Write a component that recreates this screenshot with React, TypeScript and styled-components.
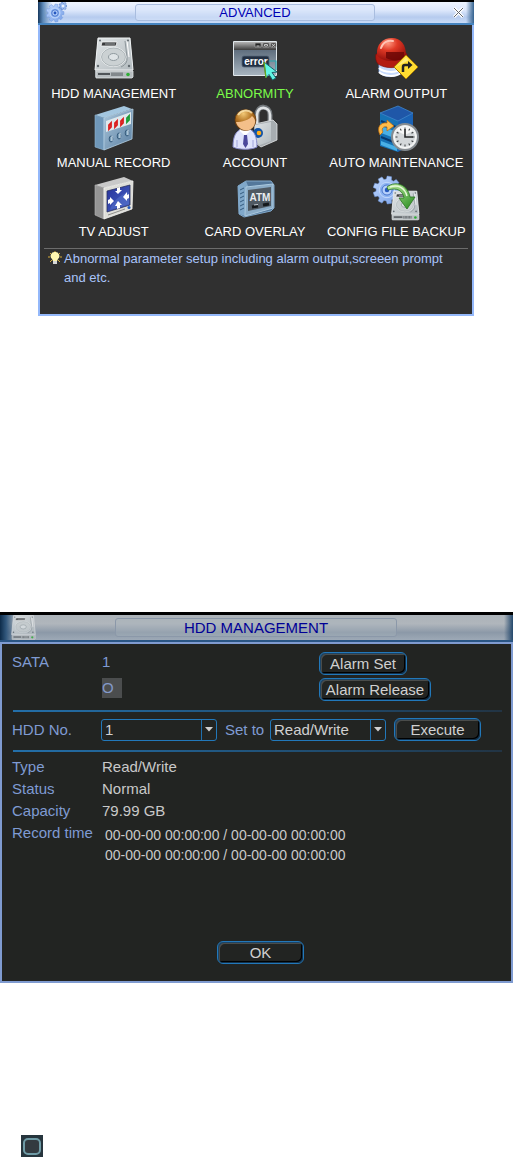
import React from "react";
import styled, { createGlobalStyle } from "styled-components";

const GlobalStyle = createGlobalStyle`
  *, *::before, *::after { box-sizing: border-box; }
  body {
    margin: 0;
    background: #ffffff;
    font-family: "Liberation Sans", Arial, sans-serif;
  }
  button, select { font-family: inherit; }
`;

const Page = styled.main`
  display: flex;
  flex-direction: column;
`;

/* ---------- window chrome ---------- */

const AdvancedWindow = styled.section`
  margin: 0 39px 296px 38px;
  background: #303030;
`;

const HddWindow = styled.section`
  background: #222422;
`;

const TitleBar = styled.header<{ $dim?: boolean }>`
  display: grid;
  grid-template-columns: ${(p) => (p.$dim ? "115px 1fr 116px" : "97px 1fr 99px")};
  align-items: center;
  height: ${(p) => (p.$dim ? 30 : 25)}px;
  border-top: ${(p) => (p.$dim ? 3 : 2)}px solid #000000;
  border-bottom: 2px solid ${(p) => (p.$dim ? "#2a5584" : "#4684bf")};
  background: ${(p) =>
    p.$dim
      ? `linear-gradient(90deg, #0d2b49 0, #31577c 6px, rgba(120,145,170,0) 16px, rgba(120,145,170,0) calc(100% - 9px), #24486c 100%),
         linear-gradient(180deg, #acb3b9 0%, #b0b6bc 35%, #8c99a8 70%, #9da9b6 100%)`
      : `linear-gradient(90deg, #16385e 0, #5d89b8 5px, rgba(180,205,240,0) 14px, rgba(180,205,240,0) calc(100% - 8px), #34628f 100%),
         linear-gradient(180deg, #eef4ff 0%, #dce7fb 40%, #b6cbee 72%, #cadcf8 100%)`};
`;

const TitleIcon = styled.div<{ $inset: number }>`
  display: flex;
  padding-left: ${(p) => p.$inset}px;
`;

const Title = styled.h1<{ $dim?: boolean }>`
  margin: 0;
  height: ${(p) => (p.$dim ? 19 : 17)}px;
  line-height: ${(p) => (p.$dim ? 18 : 15)}px;
  border: 1px solid ${(p) => (p.$dim ? "#8b98a9" : "#a9bddf")};
  border-radius: 3px;
  background: ${(p) => (p.$dim ? "rgba(170,180,190,.35)" : "rgba(215,227,250,.55)")};
  color: ${(p) => (p.$dim ? "#000096" : "#0000b4")};
  font-size: ${(p) => (p.$dim ? 15 : 13)}px;
  font-weight: 400;
  text-align: center;
  white-space: nowrap;
`;

const CloseButton = styled.button`
  display: flex;
  justify-self: end;
  margin-right: 10px;
  padding: 0;
  border: 0;
  background: none;
`;

/* ---------- advanced menu ---------- */

const AdvancedBody = styled.div`
  min-height: 291px;
  padding: 10px 4px 0 4px;
  border: 2px solid #94b8fa;
  border-top: 0;
`;

const MenuGrid = styled.nav`
  display: grid;
  grid-template-columns: repeat(3, 1fr);
  margin: 0 1px 6px -1px;
`;

const MenuItem = styled.button<{ $active?: boolean }>`
  display: flex;
  flex-direction: column;
  align-items: center;
  padding: 0;
  border: 0;
  background: none;
  color: ${(p) => (p.$active ? "#7cfc4a" : "#ffffff")};
  font-size: 13px;
  line-height: 21px;
  white-space: nowrap;
`;

const Hint = styled.p`
  display: grid;
  grid-template-columns: 20px 1fr;
  margin: 0;
  border-top: 1px solid #6c6c6c;
  color: #a9c4fb;
  font-size: 13px;
  line-height: 19px;
`;

const HintIcon = styled.span`
  display: flex;
  padding: 2px 0 0 4px;
`;

const HintText = styled.span`
  max-width: 386px;
`;

/* ---------- HDD management ---------- */

const HddBody = styled.div`
  padding: 8px 9px 17px 10px;
  border: 2px solid #7f9bd0;
  font-size: 15px;
  line-height: 20px;
  color: #c9c9c9;
`;

const SataGrid = styled.div`
  display: grid;
  grid-template-columns: 90px 1fr 183px;
  row-gap: 3px;
  align-items: start;
`;

const Label = styled.label`
  color: #7f9bd3;
  white-space: nowrap;
`;

const LabelText = styled.span`
  color: #7f9bd3;
`;

const DriveState = styled.span`
  grid-column: 2;
  justify-self: start;
  width: 20px;
  background: #4b4d4e;
  color: #8399c9;
`;

const PanelButton = styled.button<{ $width: number }>`
  width: ${(p) => p.$width}px;
  height: 23px;
  padding: 0;
  border: 1px solid #2278ba;
  border-radius: 6px;
  background: #222422;
  box-shadow: inset 1px 1px #1d4363, inset -1px -1px #12304a, inset 2px 2px #4a4c4a, inset -2px -2px #000000;
  color: #d0d0d0;
  font-size: 15px;
  line-height: 20px;
  white-space: nowrap;
`;

const Divider = styled.hr<{ $gap: number }>`
  height: 2px;
  margin: 9px 0 ${(p) => p.$gap}px 1px;
  border: 0;
  background: linear-gradient(90deg, #236fa9, #204b6d 65%, #223444);
`;

const FieldRow = styled.div`
  display: grid;
  grid-template-columns: 89px 116px 53px 116px 1fr;
  align-items: center;
`;

const SetLabel = styled(Label)`
  padding-left: 8px;
`;

const SelectBox = styled.span`
  position: relative;
  display: flex;
`;

const Select = styled.select`
  appearance: none;
  width: 100%;
  height: 22px;
  padding: 0 18px 0 3px;
  border: 1px solid #2278ba;
  border-radius: 3px;
  outline: 0;
  background: linear-gradient(#216fac, #216fac) right 14px top / 1px 100% no-repeat #222422;
  color: #d0d0d0;
  font-size: 15px;
`;

const Caret = styled.svg`
  position: absolute;
  right: 4px;
  top: 8px;
  pointer-events: none;
`;

const Execute = styled(PanelButton)`
  margin-left: 8px;
`;

const Details = styled.dl`
  display: grid;
  grid-template-columns: 90px 1fr;
  margin: 0;
  line-height: 22px;
`;

const Term = styled.dt`
  color: #7f9bd3;
  white-space: nowrap;
`;

const Value = styled.dd`
  margin: 0;
`;

const RecordTimes = styled(Value)`
  padding: 3px 0 0 3px;
  font-size: 14px;
  line-height: 20px;
`;

const Actions = styled.div`
  display: flex;
  justify-content: center;
  margin-top: 76px;
  padding-left: 7px;
`;

/* ---------- loose tick box ---------- */

const TickBox = styled.input`
  appearance: none;
  width: 22px;
  height: 22px;
  margin: 152px 0 5px 21px;
  background: #26353d;
  display: grid;
  place-items: center;

  &::before {
    content: "";
    width: 18px;
    height: 17px;
    border: 2px solid #6f9ba6;
    border-radius: 5px;
    background: #333a40;
  }
`;

/* ---------- drawings ---------- */

const gearPath = (cx: number, cy: number, outer: number, inner: number, teeth = 9) => {
  const points: string[] = [];
  for (let i = 0; i < teeth; i++) {
    const base = (i / teeth) * Math.PI * 2;
    [[-0.24, inner], [-0.16, outer], [0.16, outer], [0.24, inner]].forEach(([offset, radius]) => {
      const angle = base + (offset * 9) / teeth;
      points.push(`${(cx + Math.cos(angle) * radius).toFixed(1)} ${(cy + Math.sin(angle) * radius).toFixed(1)}`);
    });
  }
  return `M${points.join("L")}Z`;
};

const Gear = ({ cx, cy, r }: { cx: number; cy: number; r: number }) => (
  <g>
    <path d={gearPath(cx, cy, r, r * 0.78)} fill="url(#gearBlue)" stroke="#6f97dc" strokeWidth=".5" strokeLinejoin="round" />
    <circle cx={cx} cy={cy} r={r * 0.55} fill="#8db4f2" stroke="#c4dafc" strokeWidth="1" />
    <circle cx={cx} cy={cy} r={r * 0.36} fill="#b5d0fb" stroke="#4a76cc" strokeWidth="1" />
    <circle cx={cx} cy={cy} r={r * 0.16} fill="#2558bf" />
  </g>
);

const Drive = () => (
  <g>
    <path d="M8 3H40L43 34V42L41 43H7L5 42V34Z" fill="#8f969b" />
    <path d="M8 3H40L43 35H5Z" fill="url(#steel)" stroke="#eef1f2" strokeWidth="1" />
    <path d="M6 36H43V42L42 43H6Z" fill="#b7bdc0" stroke="#dfe3e5" strokeWidth=".8" />
    <path d="M12 7H27L26 11H11Z" fill="#38393b" stroke="#f6f7f7" strokeWidth=".8" />
    <path d="M15 9H25" stroke="#8f9395" strokeWidth="1.2" />
    <path d="M35 6L37 22Q38 29 31 32" fill="none" stroke="#8d969b" strokeWidth="1" />
    <path d="M37 6L39 22" fill="none" stroke="#ffffff" strokeWidth="1" />
    <ellipse cx="23.500" cy="22" rx="12.500" ry="9.500" fill="#cbd1d3" stroke="#f4f6f6" strokeWidth="1" />
    <ellipse cx="23.500" cy="22" rx="12" ry="9" fill="none" stroke="#9aa3a8" strokeWidth=".7" />
    <ellipse cx="23.500" cy="22" rx="5" ry="3.500" fill="#dfe4e6" stroke="#8f999e" strokeWidth="1" />
    <g fill="#626a70">
      <circle cx="10" cy="5.500" r="1" /><circle cx="38" cy="5.500" r="1" />
      <circle cx="8" cy="31" r="1.200" /><circle cx="39" cy="31" r="1.200" />
    </g>
    <path d="M8 39H20" stroke="#4f5458" strokeWidth="2" />
    <path d="M22 37.500V41M24 37.500V41M26 37.500V41M28 37.500V41M30 37.500V41M32 37.500V41" stroke="#4f5458" strokeWidth="1" />
    <circle cx="38" cy="39.500" r="1.800" fill="#2fae35" />
  </g>
);

const SharedPaint = () => (
  <defs>
    <linearGradient id="gearBlue" x1="0" y1="0" x2="1" y2="1"><stop stopColor="#c2d9ff" /><stop offset="1" stopColor="#769fe6" /></linearGradient>
    <linearGradient id="steel" x1="0" y1="0" x2="1" y2="1"><stop stopColor="#e0e4e6" /><stop offset="1" stopColor="#b3bbbf" /></linearGradient>
    <linearGradient id="blueSteel" x1="0" y1="0" x2="1" y2="1"><stop stopColor="#a9c5da" /><stop offset="1" stopColor="#5b80a2" /></linearGradient>
    <linearGradient id="screen" x1="0" y1="0" x2="1" y2="1"><stop stopColor="#26319b" /><stop offset="1" stopColor="#4965c4" /></linearGradient>
    <radialGradient id="dome" cx=".38" cy=".22" r=".8"><stop stopColor="#ff9a82" /><stop offset=".4" stopColor="#e03a26" /><stop offset="1" stopColor="#8e0d0a" /></radialGradient>
    <radialGradient id="hair" cx=".4" cy=".2" r=".8"><stop stopColor="#f2c876" /><stop offset=".5" stopColor="#b37322" /><stop offset="1" stopColor="#5e3107" /></radialGradient>
    <linearGradient id="greenArrow" x1="0" y1="0" x2="1" y2="1"><stop stopColor="#c4f0a4" /><stop offset="1" stopColor="#23891c" /></linearGradient>
    <linearGradient id="chrome" x1="0" y1="0" x2="0" y2="1"><stop stopColor="#b5b5b5" /><stop offset="1" stopColor="#3c3c3c" /></linearGradient>
    <linearGradient id="pane" x1="0" y1="0" x2="0" y2="1"><stop stopColor="#5f6e7e" /><stop offset="1" stopColor="#a6b3be" /></linearGradient>
  </defs>
);

const drawings: Record<string, React.ReactNode> = {
  drive: <Drive />,
  abnormity: (
    <g>
      <rect x="2" y="6" width="44" height="35" rx="1" fill="#dfe6ea" />
      <rect x="3" y="15" width="42" height="25" fill="url(#pane)" />
      <rect x="3" y="7" width="42" height="8" fill="url(#chrome)" />
      <path d="M24 8H30V12H24ZM32 8H38V12H32ZM40 8H45V12H40Z" fill="#252525" stroke="#a8a8a8" strokeWidth=".7" />
      <path d="M25.500 11H28.500M33.500 9.500H36.500V11H33.500ZM41 9L44 11.500M44 9L41 11.500" fill="none" stroke="#eeeeee" strokeWidth=".8" />
      <rect x="11" y="21" width="27" height="11" rx="2" fill="#222f42" stroke="#53657a" strokeWidth=".8" />
      <text x="25" y="30" fill="#ffffff" fontSize="10" fontWeight="700" textAnchor="middle" fontFamily="Liberation Sans, sans-serif">error</text>
      <path d="M38 26H45V35" fill="none" stroke="#22a7ad" strokeWidth="1.200" />
      <path d="M33 27L46 37L41 37.500L45 43L41.500 45L38 39.500L35 43Z" fill="#62f5e4" stroke="#17616a" strokeWidth="1" />
      <path d="M33 27L35 43" stroke="#6aa619" strokeWidth="1.200" />
    </g>
  ),
  alarm: (
    <g>
      <path d="M6 27V37C9 43 24 43 28 38V28Z" fill="#c7dafc" stroke="#87a6e6" strokeWidth=".8" />
      <path d="M6 33C11 38 23 38 28 34M6 37C11 42 23 42 28 38" fill="none" stroke="#ffffff" strokeWidth="2" />
      <path d="M3 19C2 22 3 27 5 29C12 34 26 34 33 28C35 25 35 21 33 18Z" fill="#b31c12" stroke="#760c08" strokeWidth=".6" />
      <path d="M4 20C3 9 10 3 19 3C28 3 33 10 33 20C27 28 10 28 4 20Z" fill="url(#dome)" />
      <path d="M13 17H31V24C26 26 18 26 13 23Z" fill="#6c0706" opacity=".85" />
      <path d="M8 13C10 7 15 5 20 6" fill="none" stroke="#ffc4b4" strokeWidth="2" strokeLinecap="round" />
      <path d="M33 20L45 32L33 44L21 32Z" fill="#ffdc31" stroke="#a67905" strokeWidth="1" strokeLinejoin="round" />
      <path d="M23 32L33 22L36 25Z" fill="#fff4a4" opacity=".6" />
      <path d="M30 37V32Q30 30 32 30H36" fill="none" stroke="#222222" strokeWidth="2.500" />
      <path d="M35 26L39.500 30L35 34Z" fill="#222222" />
    </g>
  ),
  record: (
    <g>
      <path d="M5 11L34 2L42 5L14 14Z" fill="#a3c6df" />
      <path d="M5 11L14 14V46L5 43Z" fill="#6f97b9" stroke="#90b6d2" strokeWidth=".6" />
      <path d="M14 14L43 5L42 35L14 46Z" fill="url(#blueSteel)" stroke="#b5d0e3" strokeWidth=".8" />
      <path d="M16 17L41 8V20L16 28Z" fill="#dfe8ec" />
      {[[20, 22, "#db1c1c"], [26, 20, "#db1c1c"], [32, 18, "#db1c1c"], [38, 15, "#189a32"]].map(([x, y, color]) => (
        <g key={String(x)}>
          <path d={`M${Number(x) - 1} ${Number(y) + 3}V${Number(y) - 1}L${Number(x) + 1} ${Number(y) - 3}V${Number(y) + 1}Z`} fill="none" stroke={String(color)} strokeWidth="1.800" />
        </g>
      ))}
      {[[21, 35], [29, 32], [37, 29]].map(([x, y]) => (
        <g key={x}>
          <ellipse cx={x} cy={y} rx="1.800" ry="3" fill="#7ba0bb" stroke="#365b7c" strokeWidth="1" />
          <path d={`M${x + 1} ${y - 3}V${y + 2}`} stroke="#ddebf4" strokeWidth="1" />
        </g>
      ))}
    </g>
  ),
  account: (
    <g>
      <path d="M26 20V11C26 0 39 1 39 11V19" fill="none" stroke="#71767a" strokeWidth="5" />
      <path d="M26 20V11C26 1 39 2 39 11V19" fill="none" stroke="#dfe2e4" strokeWidth="2.600" />
      <path d="M24 20L42 16L46 20V36L30 43L23 38Z" fill="#a7adb1" stroke="#e2e5e6" strokeWidth=".8" />
      <path d="M24 21L40 18V37L29 41L23 38Z" fill="url(#steel)" />
      <circle cx="27" cy="29" r="5" fill="#1153a8" /><circle cx="28" cy="29" r="2.300" fill="#ffad19" />
      <path d="M2 43C2 32 5 26 12 25H18C24 27 26 34 26 43C20 46 8 46 2 43Z" fill="#dfe3fb" stroke="#8588c7" strokeWidth="1" />
      <path d="M8 26L14 32L20 26L17 24H11Z" fill="#ffffff" />
      <path d="M13 31H16L17 40L14.500 44L12 40Z" fill="#4b489b" />
      <path d="M6 43V36M22 43V36" stroke="#9fa4db" strokeWidth="1" />
      <circle cx="14.500" cy="16" r="10.500" fill="url(#hair)" stroke="#6b3c0d" strokeWidth=".7" />
      <path d="M5 18C11 18 18 16 21 12C24 14 24.500 17 24 19C22 29 8 29 5 18Z" fill="#f4bf89" />
      <path d="M7 11C10 6 17 5 21 9" fill="none" stroke="#ffedbd" strokeWidth="2" opacity=".75" />
    </g>
  ),
  maintenance: (
    <g>
      <path d="M7 9L25 16V48L7 42Z" fill="#1672b5" />
      <path d="M25 16L40 9V40L25 48Z" fill="#1b62b4" />
      <path d="M7 9L25 2L40 9L25 17Z" fill="#1f57a8" stroke="#3f86cc" strokeWidth=".8" />
      <path d="M8 22L24 28V35L8 29ZM8 37L24 43V47L8 41Z" fill="#49b0e6" />
      <path d="M8 17L23 23M8 33L23 39" stroke="#06396f" strokeWidth="2" />
      <path d="M7 31C3 23 8 18 14 19V16L21 22L14 27V23C10 22 8 25 10 28Z" fill="#ffbd4b" stroke="#ba690c" strokeWidth=".7" />
      <circle cx="32" cy="33" r="13" fill="#eceeee" stroke="#858b90" strokeWidth="2" />
      <circle cx="32" cy="33" r="10.500" fill="#d4d8da" stroke="#f9fafa" strokeWidth="1" />
      <path d="M24 27A10 10 0 0 1 40 27L32 31Z" fill="#f6f7f7" />
      {Array.from({ length: 12 }, (_, i) => (
        <path key={i} d="M32 23.500V25.500" stroke="#383c3e" strokeWidth="1" transform={`rotate(${i * 30} 32 33)`} />
      ))}
      <path d="M32 25V33H40" fill="none" stroke="#252729" strokeWidth="1.600" />
    </g>
  ),
  tv: (
    <g>
      <path d="M5 12L34 4L43 8L14 15Z" fill="#c9c9c9" />
      <path d="M5 12L14 15V46L5 42Z" fill="#959595" stroke="#bababa" strokeWidth=".6" />
      <path d="M14 15L43 8L42 36L14 46Z" fill="#deded9" stroke="#f6f6f4" strokeWidth=".8" />
      <path d="M17 18L40 12V32L17 39Z" fill="url(#screen)" stroke="#28305e" strokeWidth=".8" />
      <path d="M20 37C22 28 31 21 39 19V31Z" fill="#5674cc" opacity=".5" />
      <g fill="#ffffff">
        <path d="M27 15L30 14V17L32 17L28 21L25 18H27Z" />
        <path d="M27 36L30 35V32H32L28 28L25 33H27Z" />
        <path d="M18 27L20 26V24L24 28L20 32V30L18 31Z" />
        <path d="M39 21L37 22V19L33 24L37 28V26L39 25Z" />
      </g>
      <path d="M18 42L35 36" stroke="#8d8d8a" strokeWidth="1" />
      <circle cx="39" cy="34.500" r="1.500" fill="#2058be" />
    </g>
  ),
  atm: (
    <g>
      <path d="M7 13L15 8L40 8L43 12V35L40 38L13 44L8 41Z" fill="#54789b" stroke="#81a8ca" strokeWidth="1" />
      <path d="M7 13L15 8L17 13L14 43L8 41Z" fill="#80a8ca" />
      <path d="M9 17L13 15M9 21L13 19M9 25L13 23M9 29L13 27M9 33L13 31M9 37L13 35" stroke="#365c80" strokeWidth="1" />
      <path d="M15 14L42 11V35L14 43Z" fill="#8aabc6" stroke="#abc9df" strokeWidth="1" />
      <path d="M17 17L40 14V33L17 38Z" fill="#4f5962" />
      <text x="29" y="28" fill="#e9edf0" fontSize="10" fontWeight="700" textAnchor="middle" fontFamily="Liberation Sans, sans-serif">ATM</text>
      <path d="M21 34L27 33M32 32L38 31" stroke="#15191c" strokeWidth="3" />
      <path d="M23 32L27 31.500" stroke="#c5cdd3" strokeWidth="1" />
    </g>
  ),
  backup: (
    <g>
      <Gear cx={14} cy={17} r={14} />
      <g transform="translate(15 16) scale(.72)"><Drive /></g>
      <path d="M14 14C23 7 35 12 37 24H42L34 36L26 25H31C30 18 24 14 15 17Z" fill="url(#greenArrow)" stroke="#287320" strokeWidth=".8" strokeLinejoin="round" />
      <path d="M17 14C25 11 32 15 34 23" fill="none" stroke="#e5f9d8" strokeWidth="1.500" />
    </g>
  ),
};

const menu = [
  { label: "HDD MANAGEMENT", icon: "drive" },
  { label: "ABNORMITY", icon: "abnormity", active: true },
  { label: "ALARM OUTPUT", icon: "alarm" },
  { label: "MANUAL RECORD", icon: "record" },
  { label: "ACCOUNT", icon: "account" },
  { label: "AUTO MAINTENANCE", icon: "maintenance" },
  { label: "TV ADJUST", icon: "tv" },
  { label: "CARD OVERLAY", icon: "atm" },
  { label: "CONFIG FILE BACKUP", icon: "backup" },
];

const DropDown = ({ id, value }: { id: string; value: string }) => (
  <SelectBox>
    <Select id={id} defaultValue={value}>
      <option>{value}</option>
    </Select>
    <Caret width="8" height="5" viewBox="0 0 8 5" aria-hidden="true">
      <path d="M0 0H8L4 4.500Z" fill="#d0d0d0" />
    </Caret>
  </SelectBox>
);

export default function App() {
  return (
    <Page>
      <GlobalStyle />
      <AdvancedWindow>
        <TitleBar>
          <TitleIcon $inset={8}>
            <svg width="21" height="21" viewBox="0 0 21 21" aria-hidden="true">
              <SharedPaint />
              <Gear cx={9} cy={11} r={9} />
              <path d={gearPath(17, 4, 4, 2.5, 7)} fill="#a9c8f8" stroke="#5680ca" strokeWidth=".7" />
              <circle cx="17" cy="4" r="1" fill="#ffffff" />
            </svg>
          </TitleIcon>
          <Title>ADVANCED</Title>
          <CloseButton aria-label="Close">
            <svg width="11" height="11" viewBox="0 0 11 11">
              <path d="M1 1L10 10M10 1L1 10" stroke="#ffffff" strokeWidth="3" />
              <path d="M1 1L10 10M10 1L1 10" stroke="#62666e" strokeWidth="1" />
            </svg>
          </CloseButton>
        </TitleBar>
        <AdvancedBody>
          <MenuGrid>
            {menu.map((item) => (
              <MenuItem key={item.label} $active={item.active}>
                <svg width="47" height="48" viewBox="0 0 47 48" aria-hidden="true">{drawings[item.icon]}</svg>
                {item.label}
              </MenuItem>
            ))}
          </MenuGrid>
          <Hint>
            <HintIcon>
              <svg width="14" height="14" viewBox="0 0 14 14" aria-hidden="true">
                <path d="M7 0V2M2 2L4 4M12 2L10 4M0 6H2M12 6H14M2 11L4 9M12 11L10 9" stroke="#d5aa38" strokeWidth="1" />
                <path d="M7 1A4 4 0 0 1 10 8L9 10H5L4 8A4 4 0 0 1 7 1Z" fill="#fff7b0" />
                <rect x="5" y="10" width="4" height="3" fill="#d8d8d8" />
              </svg>
            </HintIcon>
            <HintText>Abnormal parameter setup including alarm output,screeen prompt and etc.</HintText>
          </Hint>
        </AdvancedBody>
      </AdvancedWindow>

      <HddWindow>
        <TitleBar $dim>
          <TitleIcon $inset={11}>
            <svg width="25" height="25" viewBox="4 2 40 42" preserveAspectRatio="none" opacity=".8" aria-hidden="true"><Drive /></svg>
          </TitleIcon>
          <Title as="h2" $dim>HDD MANAGEMENT</Title>
        </TitleBar>
        <HddBody>
          <SataGrid>
            <LabelText>SATA</LabelText>
            <LabelText>1</LabelText>
            <PanelButton $width={88}>Alarm Set</PanelButton>
            <DriveState>O</DriveState>
            <PanelButton $width={112}>Alarm Release</PanelButton>
          </SataGrid>
          <Divider $gap={6} />
          <FieldRow>
            <Label htmlFor="hdd-no">HDD No.</Label>
            <DropDown id="hdd-no" value="1" />
            <SetLabel htmlFor="set-to">Set to</SetLabel>
            <DropDown id="set-to" value="Read/Write" />
            <Execute $width={87}>Execute</Execute>
          </FieldRow>
          <Divider $gap={4} />
          <Details>
            <Term>Type</Term>
            <Value>Read/Write</Value>
            <Term>Status</Term>
            <Value>Normal</Value>
            <Term>Capacity</Term>
            <Value>79.99 GB</Value>
            <Term>Record time</Term>
            <RecordTimes>
              00-00-00 00:00:00 / 00-00-00 00:00:00
              <br />
              00-00-00 00:00:00 / 00-00-00 00:00:00
            </RecordTimes>
          </Details>
          <Actions>
            <PanelButton $width={87}>OK</PanelButton>
          </Actions>
        </HddBody>
      </HddWindow>

      <TickBox type="checkbox" aria-label="Select" />
    </Page>
  );
}
